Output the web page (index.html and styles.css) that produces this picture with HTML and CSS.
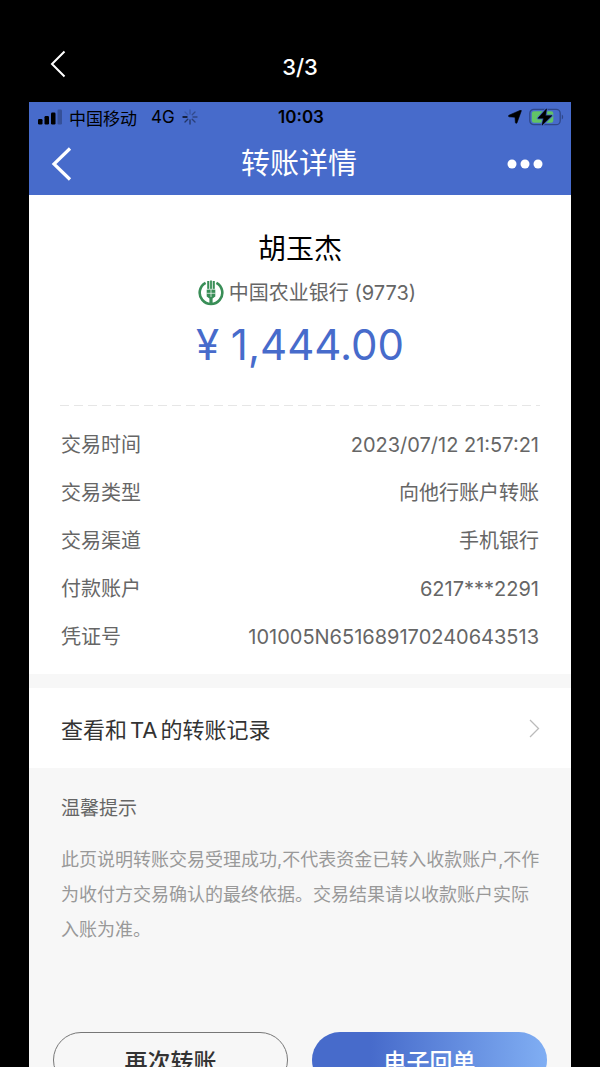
FILE: index.html
```html
<!DOCTYPE html>
<html lang="zh-CN">
<head>
    <meta charset="UTF-8">
    <meta name="viewport" content="width=device-width, initial-scale=1.0">
    <title>转账详情</title>
    <link rel="stylesheet" href="styles.css">
</head>
<body>
    <div class="viewer">
        <header class="viewer-bar">
            <button class="icon-button" type="button" aria-label="返回">
                <svg width="16" height="28" viewBox="0 0 16 28" fill="none" stroke="#fff" stroke-width="2">
                    <path d="M14.500 1.500 2 14l12.500 12.500"/>
                </svg>
            </button>
            <span class="viewer-count">3/3</span>
        </header>

        <div class="screen">
            <!-- Status bar -->
            <div class="status-bar">
                <div class="status-left">
                    <svg width="24" height="16" viewBox="0 0 24 16">
                        <rect x="0" y="10" width="4.500" height="5.500" rx="1.200"/>
                        <rect x="6.500" y="7" width="4.500" height="8.500" rx="1.200"/>
                        <rect x="13" y="3.500" width="4.500" height="12" rx="1.200"/>
                        <rect x="19.500" y="0.500" width="4.500" height="15" rx="1.200" opacity="0.250"/>
                    </svg>
                    <span>中国移动</span>
                    <span class="network">4G</span>
                    <svg width="16" height="16" viewBox="0 0 16 16" stroke="#000" stroke-width="1.300" stroke-linecap="round">
                        <path d="M1 8h4" opacity="0.900"/>
                        <path d="M3 3l2.800 2.800" opacity="0.150"/>
                        <path d="M8 1v4" opacity="0.200"/>
                        <path d="M13 3l-2.800 2.800" opacity="0.300"/>
                        <path d="M15 8h-4" opacity="0.350"/>
                        <path d="M13 13l-2.800-2.800" opacity="0.400"/>
                        <path d="M8 15v-4" opacity="0.500"/>
                        <path d="M3 13l2.800-2.800" opacity="0.500"/>
                    </svg>
                </div>
                <span class="clock">10:03</span>
                <div class="status-right">
                    <svg width="14" height="14" viewBox="0 0 14 14">
                        <path d="M13.300.9 9 12.800c-.3.800-1.500.7-1.600-.2L7 7.200 1.300 6.800C.3 6.700.2 5.600 1 5.200L12.500.2c.5-.2 1 .2.800.7z" stroke="#000" stroke-width="0.600"/>
                    </svg>
                    <svg width="35" height="18" viewBox="0 0 35 18">
                        <rect x="0.800" y="1.300" width="30.400" height="15.400" rx="4" fill="none" stroke="#2f478a" stroke-width="1.300"/>
                        <path d="M32.800 6.500c1.800.8 1.800 4.200 0 5z" fill="#2f478a"/>
                        <rect x="2.800" y="3.300" width="21.500" height="11.400" rx="2.200" fill="#61c466"/>
                        <path d="M17.500.8 9 10.200h5.600L13 17.200 22.800 7.700H16.600z" stroke="#476bcb" stroke-width="2.400" stroke-linejoin="round"/>
                        <path d="M17.500.8 9 10.200h5.600L13 17.200 22.800 7.700H16.600z" stroke="#000" stroke-width="0.600" stroke-linejoin="round"/>
                    </svg>
                </div>
            </div>

            <nav class="nav-bar">
                <button class="icon-button" type="button" aria-label="后退">
                    <svg width="22" height="34" viewBox="0 0 22 34" fill="none" stroke="#fff" stroke-width="3.200">
                        <path d="M19 1.500 3 17l16 15.500"/>
                    </svg>
                </button>
                <h1 class="nav-title">转账详情</h1>
                <button class="icon-button nav-more" type="button" aria-label="更多">
                    <svg width="36" height="10" viewBox="0 0 36 10" fill="#fff">
                        <circle cx="5" cy="5" r="4.500"/>
                        <circle cx="18" cy="5" r="4.500"/>
                        <circle cx="31" cy="5" r="4.500"/>
                    </svg>
                </button>
            </nav>

            <main>
                <section class="receipt">
                    <div class="payee">
                        <h2 class="payee-name">胡玉杰</h2>
                        <p class="payee-bank">
                            <svg width="26" height="26" viewBox="0 0 26 26">
                                <path d="M7.600 2.800a11.300 11.300 0 1 0 10.800 0" fill="none" stroke="#398e57" stroke-width="2.600"/>
                                <path d="M9.200 1h2.100v8h.8V.5h1.800V9h.8V1h2.100v8.500h.5v7l-2.700 1.900V25h-3.200v-6.600l-2.700-1.900v-7h.5z" fill="#398e57"/>
                                <path d="M13 9.500v7.500M8.500 9.300h9M8.500 13.300h9" stroke="#fff" stroke-width="0.700"/>
                            </svg>
                            <span>中国农业银行 (9773)</span>
                        </p>
                        <p class="amount">¥ 1,444.00</p>
                    </div>

                    <dl class="details">
                        <div class="detail-row">
                            <dt>交易时间</dt>
                            <dd>2023/07/12 21:57:21</dd>
                        </div>
                        <div class="detail-row">
                            <dt>交易类型</dt>
                            <dd>向他行账户转账</dd>
                        </div>
                        <div class="detail-row">
                            <dt>交易渠道</dt>
                            <dd>手机银行</dd>
                        </div>
                        <div class="detail-row">
                            <dt>付款账户</dt>
                            <dd>6217***2291</dd>
                        </div>
                        <div class="detail-row">
                            <dt>凭证号</dt>
                            <dd>101005N651689170240643513</dd>
                        </div>
                    </dl>
                </section>

                <a class="history-link" href="#">
                    <span>查看和<span class="latin">TA</span>的转账记录</span>
                    <svg width="11" height="19" viewBox="0 0 11 19" fill="none" stroke="#bbb" stroke-width="1.300">
                        <path d="M1 1l8.500 8.500L1 18"/>
                    </svg>
                </a>

                <section class="tips">
                    <h3 class="tips-title">温馨提示</h3>
                    <p class="tips-text">此页说明转账交易受理成功,不代表资金已转入收款账户,不作为收付方交易确认的最终依据。交易结果请以收款账户实际入账为准。</p>
                </section>

                <div class="actions">
                    <button class="action-button" type="button">再次转账</button>
                    <button class="action-button primary" type="button">电子回单</button>
                </div>
            </main>
        </div>
    </div>
</body>
</html>
```
FILE: styles.css
```css
* {
    box-sizing: border-box;
}

body {
    margin: 0;
    background-color: #000;
    font-family: Inter, "Noto Sans CJK SC", sans-serif;
    color: #666;
}

h1, h2, h3, p, dl, dd {
    margin: 0;
    font-weight: 400;
}

svg {
    display: block;
    flex: none;
}

.viewer {
    height: 100vh;
    overflow: hidden;
    display: flex;
    flex-direction: column;
}

.icon-button {
    justify-self: start;
    padding: 0;
    border: none;
    background: none;
    cursor: pointer;
}

.viewer-bar {
    flex: none;
    display: grid;
    grid-template-columns: 1fr auto 1fr;
    align-items: center;
    height: 102px;
    padding: 26px 50px 0;
    color: #fff;
}

.viewer-count {
    padding-top: 6px;
    font-size: 22px;
    font-weight: 500;
}

.screen {
    flex: 1 0 auto;
    margin: 0 29px;
    background-color: #f7f7f7;
}

/* Status bar */
.status-bar {
    display: grid;
    grid-template-columns: 1fr auto 1fr;
    align-items: center;
    height: 30px;
    padding: 0 7px 0 9px;
    background-color: #476bcb;
    color: #000;
    font-size: 17px;
}

.status-left, .status-right {
    display: flex;
    align-items: center;
    gap: 7px;
}

.status-right {
    justify-content: flex-end;
}

.network {
    margin-left: 7px;
}

.clock {
    font-weight: 600;
}

.nav-bar {
    display: grid;
    grid-template-columns: 1fr auto 1fr;
    align-items: center;
    height: 63px;
    padding: 0 28px 0 22px;
    background-color: #476bcb;
    color: #fff;
}

.nav-title {
    padding-left: 4px;
    font-size: 29px;
    line-height: 40px;
}

.nav-more {
    justify-self: end;
}

/* Receipt */
.receipt {
    padding: 34px 31px 13px;
    background-color: #fff;
}

.payee {
    display: flex;
    flex-direction: column;
    align-items: center;
    padding-bottom: 33px;
    background: repeating-linear-gradient(to right, #e6e6e6 0 9px, #fff 9px 14px) bottom / 100% 1px no-repeat;
}

.payee-name {
    font-size: 28px;
    line-height: 40px;
    color: #000;
}

.payee-bank {
    display: flex;
    align-items: center;
    gap: 5px;
    padding-left: 14px;
    font-size: 20px;
    line-height: 48px;
}

.amount {
    font-size: 42px;
    line-height: 56px;
    color: #476bcb;
}

.details {
    padding-top: 15px;
}

.detail-row {
    display: flex;
    justify-content: space-between;
    padding: 0 1px;
    font-size: 20px;
    line-height: 48px;
}

.history-link {
    display: flex;
    justify-content: space-between;
    align-items: center;
    height: 80px;
    margin-top: 14px;
    padding: 0 31px 0 32px;
    background-color: #fff;
    color: #333;
    font-size: 22px;
    text-decoration: none;
}

.latin {
    margin: 0 3px;
}

/* Tips */
.tips {
    padding: 27px 25px 0 32px;
}

.tips-title {
    font-size: 19px;
    line-height: 28px;
}

.tips-text {
    padding-top: 19px;
    font-size: 18px;
    line-height: 35px;
    color: #999;
}

.actions {
    display: grid;
    grid-template-columns: 1fr 1fr;
    gap: 24px;
    padding: 85px 24px 24px;
}

.action-button {
    height: 56px;
    border: 1px solid #777;
    border-radius: 28px;
    background: none;
    color: #333;
    font-family: inherit;
    font-size: 23px;
    font-weight: 500;
    cursor: pointer;
}

.primary {
    border: none;
    background: linear-gradient(to right, #476bcb 25%, #80aef3);
    color: #fff;
}
```
